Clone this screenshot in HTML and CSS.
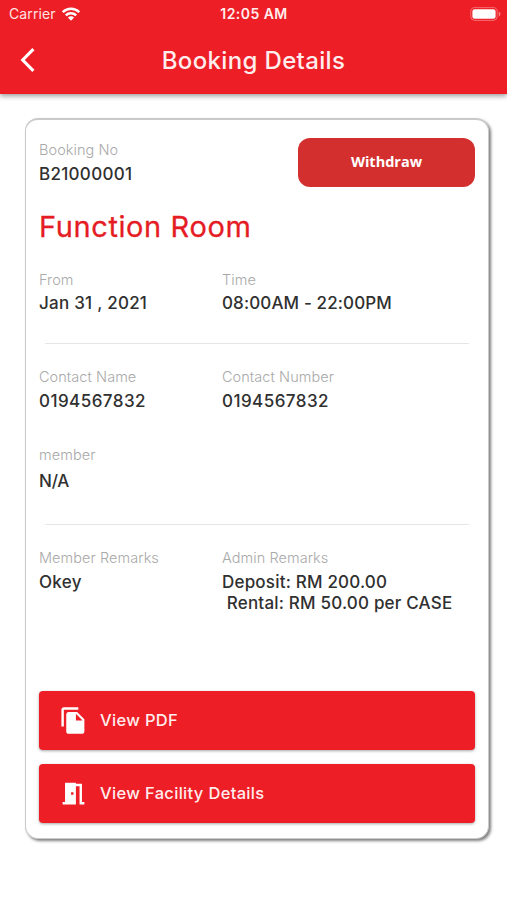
FILE: index.html
```html
<!DOCTYPE html>
<html lang="en">
<head>
<meta charset="utf-8">
<title>Booking Details</title>
<link rel="stylesheet" href="styles.css">
</head>
<body>
<header class="header">
  <div class="status">
    <div class="status-left"><span class="carrier">Carrier</span>
      <svg class="wifi" width="18" height="14" viewBox="0 0 18 14"><g fill="none" stroke="#fff" stroke-width="2.5"><path d="M.8 5.200a11.600 11.600 0 0 1 16.400 0"/><path d="M3.800 8.400a7.400 7.400 0 0 1 10.400 0"/></g><path fill="#fff" d="M5.900 10.600a4.400 4.400 0 0 1 6.200 0L9 13.700z"/></svg>
    </div>
    <span class="clock">12:05 AM</span>
    <svg class="battery" width="31" height="14" viewBox="0 0 31 14"><rect x=".8" y=".6" width="26.4" height="12.8" rx="4" fill="none" stroke="#fff" stroke-opacity=".35"/><rect x="2.4" y="2.3" width="23.2" height="9.4" rx="2.3" fill="#fff"/><path d="M28.800 4.600v4.800c1-.4 1.600-1.300 1.600-2.400s-.6-2-1.600-2.400z" fill="#fff" fill-opacity=".45"/></svg>
  </div>
  <div class="nav">
    <svg class="back" width="16" height="26" viewBox="0 0 16 26"><path d="M13.400 2.100 2.700 13l10.700 10.900" fill="none" stroke="#fff" stroke-width="3.1"/></svg>
    <h1 class="title">Booking Details</h1>
  </div>
</header>
<main class="card">
  <div class="top">
    <div class="field"><span class="label">Booking No</span><span class="value">B21000001</span></div>
    <button class="withdraw">Withdraw</button>
  </div>
  <h2 class="room">Function Room</h2>
  <section class="row row-date">
    <div class="field"><span class="label">From</span><span class="value value-date">Jan 31 , 2021</span></div>
    <div class="field"><span class="label">Time</span><span class="value value-date value-time">08:00AM - 22:00PM</span></div>
  </section>
  <hr class="rule">
  <section class="row row-contact">
    <div class="field"><span class="label">Contact Name</span><span class="value value-phone">0194567832</span></div>
    <div class="field"><span class="label">Contact Number</span><span class="value value-phone">0194567832</span></div>
  </section>
  <section class="row row-member">
    <div class="field"><span class="label">member</span><span class="value na">N/A</span></div>
  </section>
  <hr class="rule">
  <section class="row row-remarks">
    <div class="field"><span class="label">Member Remarks</span><span class="value">Okey</span></div>
    <div class="field"><span class="label">Admin Remarks</span><span class="value remark">Deposit: RM 200.00
 Rental: RM 50.00 per CASE</span></div>
  </section>
  <div class="actions">
    <button class="action"><svg class="icon" width="29" height="29" viewBox="0 0 24 24"><path fill="#fff" d="M16 1H4c-1.100 0-2 .9-2 2v14h2V3h12V1zm-1 4 6 6v10c0 1.100-.9 2-2 2H7.990C6.890 23 6 22.100 6 21l.01-14c0-1.100.89-2 1.990-2h7zm-1 7h5.500L14 6.500V12z"/></svg><span>View PDF</span></button>
    <button class="action"><svg class="icon" width="29" height="29" viewBox="0 0 24 24"><path fill="#fff" d="M14 6v15H3v-2h2V3h9v1h5v15h2v2h-4V6h-3zm-4 5v2h2v-2h-2z"/></svg><span>View Facility Details</span></button>
  </div>
</main>
</body>
</html>
```
FILE: styles.css
```css
* { box-sizing: border-box; }
body { margin: 0; height: 900px; background: #fff; font-family: Inter, "Liberation Sans", sans-serif; overflow: hidden; }
button { border: 0; font: inherit; color: #fff; }
h1, h2 { margin: 0; font-weight: 400; }

.header { height: 94px; background: #ee1e26; color: #fff; box-shadow: 0 2px 5px rgba(0, 0, 0, .4); }
.status { display: grid; grid-template-columns: 1fr auto 1fr; align-items: center; height: 27px; padding: 0 6px 0 9px; }
.status-left { display: flex; align-items: center; gap: 6px; color: #ffe3e3; }
.carrier { font-size: 14px; letter-spacing: .1px; }
.clock { margin-right: 2px; font-size: 14px; font-weight: 600; letter-spacing: .45px; color: #ffeded; }
.battery { justify-self: end; }
.nav { display: grid; grid-template-columns: 40px 1fr 40px; align-items: center; height: 66px; }
.back { margin-left: 20px; }
.title { text-align: center; font-size: 24px; font-weight: 500; letter-spacing: .35px; color: #ffeded; }

.card { display: flex; flex-direction: column; width: 464px; height: 721px; margin: 24px 0 0 25px; padding: 18px 13px 15px; border: 1px solid #cacaca; border-top-width: 2px; border-radius: 13px; background: #fff; box-shadow: 2px 2px 3px rgba(0, 0, 0, .5); }
.top { display: flex; justify-content: space-between; height: 49px; }
.field { display: flex; flex-direction: column; align-items: flex-start; }
.label { font-size: 14.500px; line-height: 24px; font-weight: 300; color: #a9a9a9; letter-spacing: .06px; white-space: nowrap; }
.value { padding-top: 1px; font-size: 17px; line-height: 23px; font-weight: 500; color: #303030; letter-spacing: .3px; white-space: pre; }
.value-date { padding-top: 0; letter-spacing: .25px; }
.value-phone { letter-spacing: .45px; }
.value-time { letter-spacing: .13px; }
.withdraw { width: 177px; height: 49px; border-radius: 12px; background: #d32f2f; font-family: "Open Sans", sans-serif; font-weight: 700; font-size: 14.500px; padding: 0 0 2px; }
.room { margin-top: 20px; font-size: 29px; line-height: 40px; color: #e51c24; letter-spacing: .6px; -webkit-text-stroke: .3px #e51c24; }
.row { display: grid; grid-template-columns: 183px 1fr; }
.row-date { margin-top: 21px; height: 75px; }
.rule { width: 424px; height: 1px; margin: 0 0 0 6px; border: 0; background: #e6e6e6; flex: none; }
.row-contact { margin-top: 21px; height: 78px; }
.row-member { height: 81px; }
.na { margin-top: 2px; letter-spacing: -.2px; }
.row-remarks { margin-top: 21px; }
.remark { line-height: 21px; margin-top: 1px; letter-spacing: .2px; }
.actions { display: flex; flex-direction: column; gap: 14px; margin-top: auto; }
.action { display: flex; align-items: center; width: 100%; height: 59px; padding: 0 0 1px 20px; border-radius: 4px; background: #ee1e26; box-shadow: 0 1px 3px rgba(0, 0, 0, .35); font-size: 16.500px; font-weight: 500; letter-spacing: .32px; color: #ffeded; }
.icon { margin-right: 12px; }
```
